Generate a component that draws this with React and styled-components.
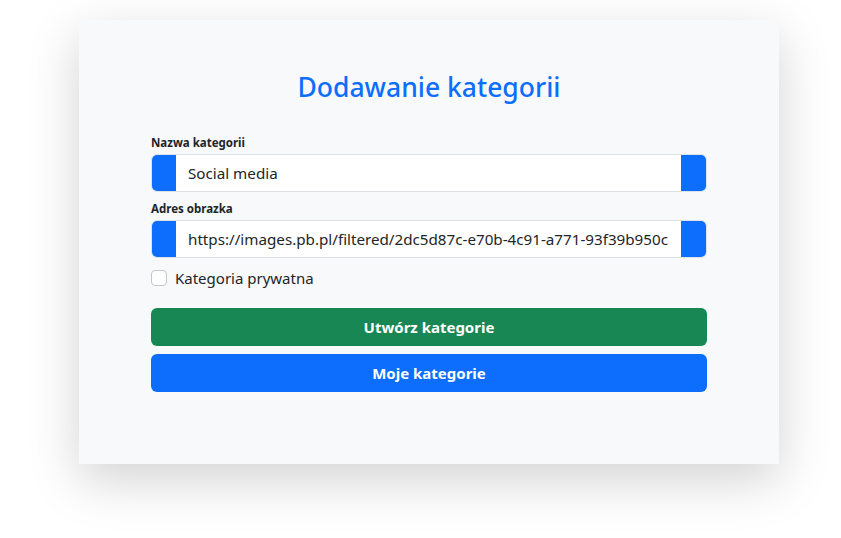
import React from 'react';
import styled, { createGlobalStyle } from 'styled-components';

const GlobalStyle = createGlobalStyle`
  body {
    margin: 0;
    background: #fff;
    font-family: "Noto Sans", "Open Sans", sans-serif;
    color: #212529;
  }
`;

const Page = styled.div`
  padding: 20px 0 0 79px;
  width: 841px;
  height: 538px;
  box-sizing: border-box;
`;

const Card = styled.div`
  width: 700px;
  height: 444px;
  box-sizing: border-box;
  background: #f8f9fa;
  box-shadow: 0 16px 48px rgba(0, 0, 0, 0.175);
  padding: 50px 72px 0;
`;

const Title = styled.h2`
  margin: 0 0 30px;
  text-align: center;
  font-size: 26.5px;
  line-height: 34px;
  font-weight: 500;
  color: #0d6efd;
`;

const Label = styled.label`
  display: block;
  font-size: 11.5px;
  line-height: 18px;
  font-weight: 700;
  margin-bottom: 2px;
`;

const Field = styled.div`
  margin-bottom: ${(p) => p.$gap || 8}px;
`;

const InputGroup = styled.div`
  display: flex;
  height: 38px;
  box-sizing: border-box;
  border: 1px solid #dee2e6;
  border-radius: 6px;
  overflow: hidden;
  background: #fff;
`;

const Addon = styled.span`
  width: ${(p) => p.$w}px;
  background: #0d6efd;
  flex: none;
`;

const Input = styled.input`
  flex: 1;
  min-width: 0;
  border: none;
  outline: none;
  padding: 0 12px;
  font-family: inherit;
  font-size: 15.2px;
  color: #212529;
  background: #fff;
`;

const CheckRow = styled.label`
  display: flex;
  align-items: center;
  gap: 8px;
  height: 24px;
  font-size: 15px;
  margin-bottom: 18px;
`;

const Box = styled.span`
  width: 16px;
  height: 16px;
  box-sizing: border-box;
  border: 1px solid #c4c8cc;
  border-radius: 4px;
  background: #fff;
`;

const Button = styled.button`
  display: block;
  width: 100%;
  height: 38px;
  margin-bottom: 8px;
  border: none;
  border-radius: 6px;
  background: ${(p) => p.$bg};
  color: #fff;
  font-family: inherit;
  font-size: 15px;
  font-weight: 700;
`;

export default function App() {
  return (
    <Page>
      <GlobalStyle />
      <Card>
        <Title>Dodawanie kategorii</Title>
        <Field>
          <Label>Nazwa kategorii</Label>
          <InputGroup>
            <Addon $w={24} />
            <Input defaultValue="Social media" />
            <Addon $w={25} />
          </InputGroup>
        </Field>
        <Field>
          <Label>Adres obrazka</Label>
          <InputGroup>
            <Addon $w={24} />
            <Input defaultValue="https://images.pb.pl/filtered/2dc5d87c-e70b-4c91-a771-93f39b950c" />
            <Addon $w={25} />
          </InputGroup>
        </Field>
        <CheckRow>
          <Box />
          Kategoria prywatna
        </CheckRow>
        <Button $bg="#198754">Utwórz kategorie</Button>
        <Button $bg="#0d6efd">Moje kategorie</Button>
      </Card>
    </Page>
  );
}
